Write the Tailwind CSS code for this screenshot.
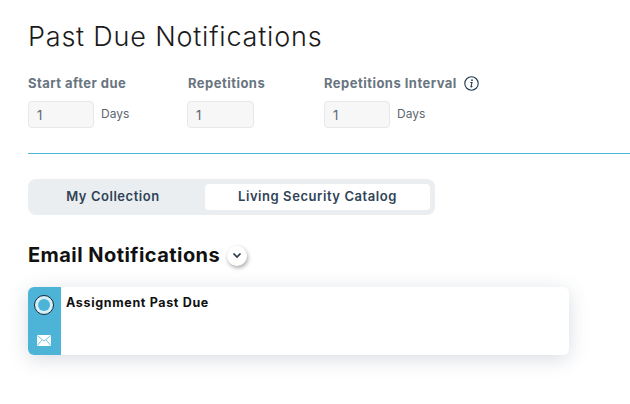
<!DOCTYPE html>
<html><head><script src="https://cdn.jsdelivr.net/npm/@tailwindcss/browser@4"></script></head>
<body class="bg-white w-[630px] h-[404px] overflow-hidden font-['Inter',sans-serif]">
<div class="pl-7 pt-[20px]">
  <h1 class="text-[27px] leading-[33px] font-light text-[#1a1a1a] tracking-[0.8px]">Past Due Notifications</h1>
  <div class="flex mt-[22px] h-[53px]">
    <div class="w-[159px]">
      <div class="text-[13px] leading-[16px] font-bold text-[#69757f] tracking-[0.47px]">Start after due</div>
      <div class="flex mt-[10px] gap-[7px]">
        <div class="w-[66px] h-[27px] bg-[#f7f7f7] border border-[#e6e8ea] rounded-[4px] pl-2 pt-[4px] text-[13px] leading-[18px] text-[#5d6870]">1</div>
        <span class="text-[12px] leading-[18px] text-[#5d6870] mt-[4px]">Days</span>
      </div>
    </div>
    <div class="w-[137px]">
      <div class="pl-px text-[13px] leading-[16px] font-bold text-[#69757f] tracking-[0.47px]">Repetitions</div>
      <div class="flex mt-[10px]">
        <div class="w-[67px] h-[27px] bg-[#f7f7f7] border border-[#e6e8ea] rounded-[4px] pl-2 pt-[4px] text-[13px] leading-[18px] text-[#5d6870]">1</div>
      </div>
    </div>
    <div>
      <div class="flex items-center gap-[7px] text-[13px] leading-[16px] font-bold text-[#69757f] tracking-[0.47px]">Repetitions Interval
        <svg width="15" height="15" viewBox="0 0 15 15" fill="none"><circle cx="7.5" cy="7.5" r="6.7" stroke="#1f3a52" stroke-width="1.1"/><circle cx="8" cy="4.2" r="0.9" fill="#1f3a52"/><path d="M6.3 6.5H8L7 10.6c-.1.4.4.6 1.4-.2" stroke="#1f3a52" stroke-width="1.1" fill="none"/></svg>
      </div>
      <div class="flex mt-[10px] gap-[7px]">
        <div class="w-[66px] h-[27px] bg-[#f7f7f7] border border-[#e6e8ea] rounded-[4px] pl-2 pt-[4px] text-[13px] leading-[18px] text-[#5d6870]">1</div>
        <span class="text-[12px] leading-[18px] text-[#5d6870] mt-[4px]">Days</span>
      </div>
    </div>
  </div>
  <div class="h-px bg-[#4fb3d9] mt-[25px]"></div>
  <div class="mt-[25px] w-[407px] h-[36px] bg-[#ebeef1] rounded-[8px] p-[5px] flex items-center">
    <div class="w-[172px] pr-[12px] text-center text-[13px] font-semibold text-[#2f4356] tracking-[0.55px]">My Collection</div>
    <div class="w-[225px] h-[26px] bg-white rounded-[4px] flex items-center justify-center text-[13px] font-semibold text-[#2f4356] tracking-[0.57px]">Living Security Catalog</div>
  </div>
  <div class="flex items-center mt-[27px] gap-[7px]">
    <h2 class="text-[20px] leading-[26px] font-bold text-[#111] tracking-[0.45px]">Email Notifications</h2>
    <div class="w-[20px] h-[20px] mt-[1px] rounded-full bg-white shadow-[1px_2px_4px_rgba(0,0,0,0.35)] flex items-center justify-center">
      <svg width="10" height="7" viewBox="0 0 10 7" fill="none"><path d="M1.5 1.5 5 5l3.5-3.5" stroke="#2b3b4a" stroke-width="1.7"/></svg>
    </div>
  </div>
  <div class="mt-[19px] w-[541px] h-[68px] flex rounded-[6px] bg-white shadow-[0_4px_20px_rgba(60,80,110,0.2)] overflow-hidden">
    <div class="w-[33px] bg-[#4db3d7] flex flex-col items-center pt-[8px] pr-px">
      <div class="w-[20px] h-[20px] rounded-full border-[1.5px] border-[#14283a] bg-[#d8eff8] flex items-center justify-center">
        <div class="w-[12px] h-[12px] rounded-full bg-[#4db3d7]"></div>
      </div>
      <svg class="mt-[20px]" width="14" height="11" viewBox="0 0 14 11" fill="none"><rect width="14" height="11" rx="1" fill="#fff"/><path d="M0.5 0.8 7 6l6.5-5.2M0.5 10.2 5 5M13.5 10.2 9 5" stroke="#4db3d7" stroke-width="0.8"/></svg>
    </div>
    <div class="pl-[5px] pt-[8px] text-[12.5px] leading-[16px] font-bold text-[#111] tracking-[0.66px]">Assignment Past Due</div>
  </div>
</div>
</body></html>
